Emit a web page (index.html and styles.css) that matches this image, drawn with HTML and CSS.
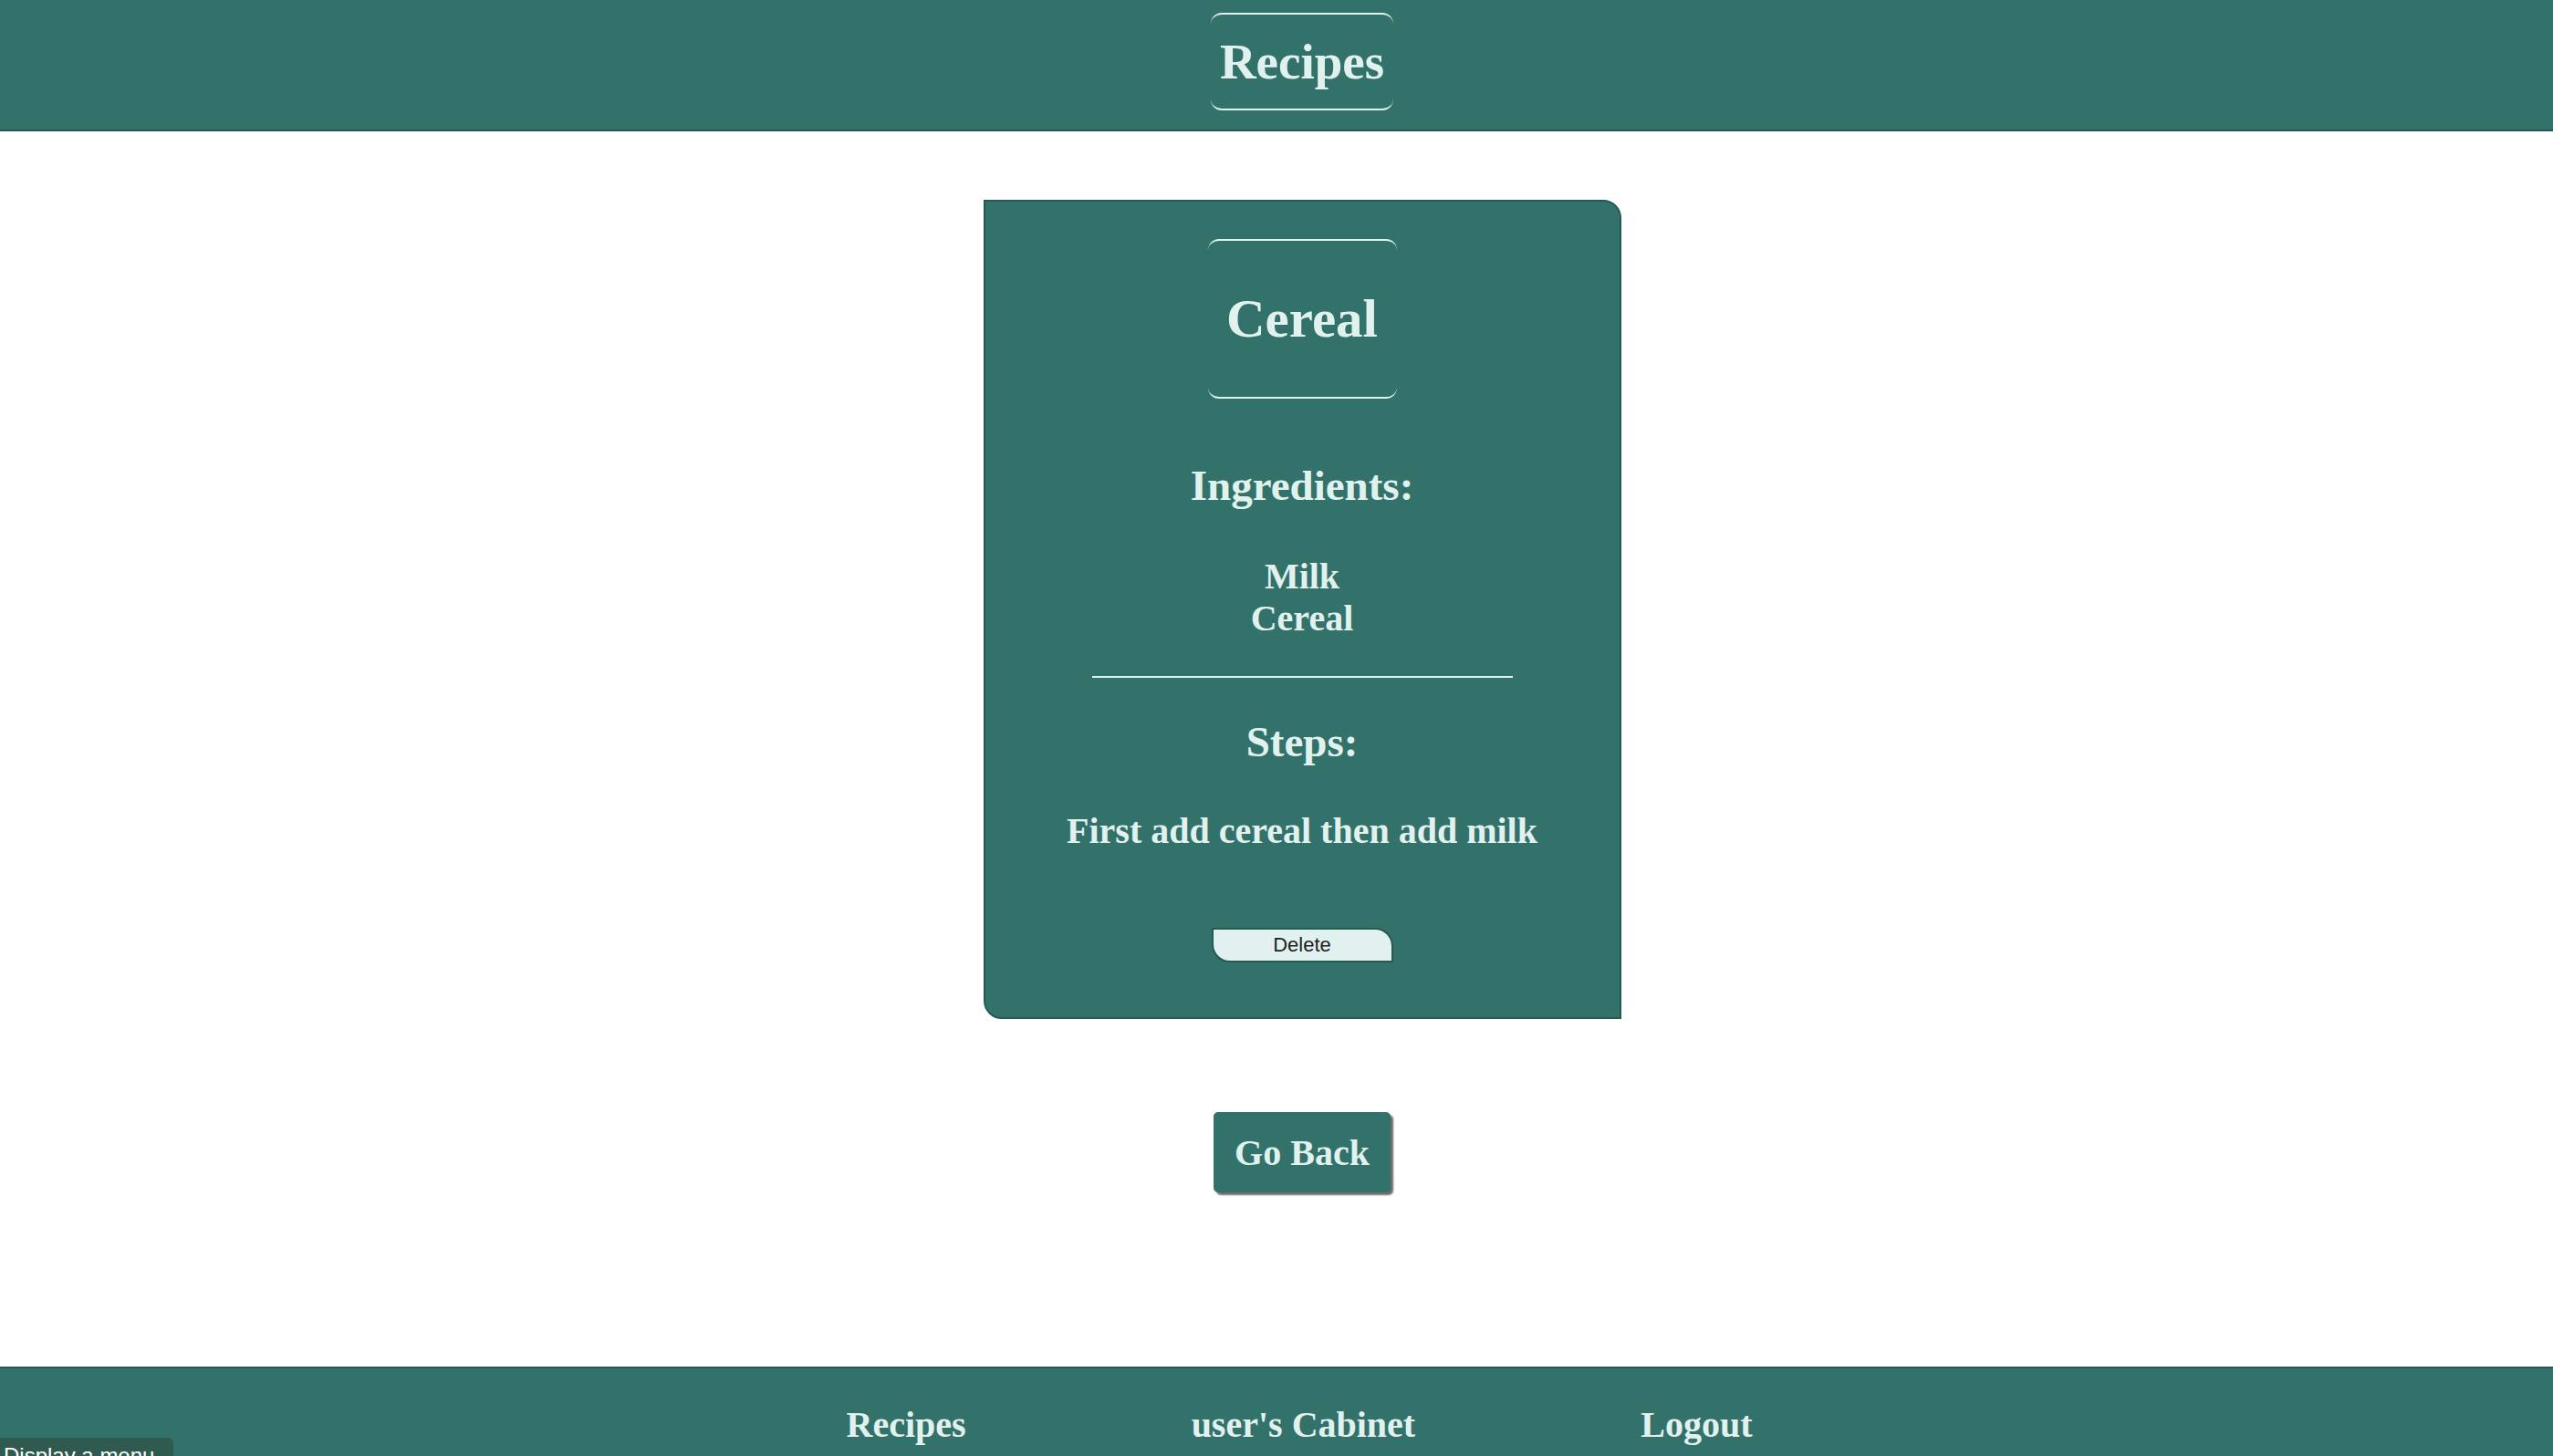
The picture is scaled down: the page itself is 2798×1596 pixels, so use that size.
FILE: index.html
```html
<!DOCTYPE html>
<html lang="en">
<head>
<meta charset="utf-8">
<title>Recipes</title>
<link rel="stylesheet" href="styles.css">
</head>
<body>
<header class="topbar">
  <div class="shift">
    <h1 class="brand">Recipes</h1>
  </div>
</header>
<main class="main shift">
  <section class="card">
    <h1 class="card-title">Cereal</h1>
    <h2 class="section-title first">Ingredients:</h2>
    <ul class="ingredients">
      <li>Milk</li>
      <li>Cereal</li>
    </ul>
    <hr class="divider">
    <h2 class="section-title">Steps:</h2>
    <p class="steps">First add cereal then add milk</p>
    <button class="delete" type="button">Delete</button>
  </section>
  <button class="back" type="button">Go Back</button>
</main>
<footer class="footer">
  <nav class="footer-nav shift">
    <a class="footer-link" href="#">Recipes</a>
    <a class="footer-link" href="#">user's Cabinet</a>
    <a class="footer-link" href="#">Logout</a>
  </nav>
</footer>
<div class="tooltip">Display a menu</div>
</body>
</html>
```
FILE: styles.css
```css
html, body {
  margin: 0;
  padding: 0;
  background: #ffffff;
}
body {
  font-family: "Liberation Serif", "Times New Roman", serif;
  color: #e1f1ee;
  min-height: 1596px;
  display: flex;
  flex-direction: column;
}
.shift {
  padding-left: 56px;
}
.topbar {
  background: #33726a;
  border-bottom: 2px solid #245a52;
  height: 142px;
  display: flex;
  flex-direction: column;
  justify-content: flex-start;
}
.topbar .shift {
  display: flex;
  justify-content: center;
  padding-top: 14px;
}
.brand {
  margin: 0;
  font-size: 55px;
  line-height: 63px;
  font-weight: bold;
  padding: 20px 8px;
  width: 184px;
  text-align: center;
  border-top: 2px solid #e1f1ee;
  border-bottom: 2px solid #e1f1ee;
  border-radius: 12px;
}
.main {
  display: flex;
  flex-direction: column;
  align-items: center;
  padding-top: 75px;
  flex: 1;
}
.card {
  box-sizing: border-box;
  width: 699px;
  background: #33726a;
  border: 2px solid #245a52;
  border-radius: 0 20px 0 20px;
  padding: 41px 0 60px;
  display: flex;
  flex-direction: column;
  align-items: center;
  text-align: center;
}
.card-title {
  margin: 0;
  font-size: 59px;
  line-height: 68px;
  font-weight: bold;
  padding: 51px 18px 52px;
  width: 171px;
  border-top: 2px solid #e1f1ee;
  border-bottom: 2px solid #e1f1ee;
  border-radius: 12px;
}
.section-title {
  margin: 43px 0 0;
  font-size: 47px;
  line-height: 55px;
  font-weight: bold;
}
.section-title.first {
  margin-top: 68px;
}
.ingredients {
  list-style: none;
  margin: 49px 0 0;
  padding: 0;
  font-size: 40px;
  line-height: 46px;
  font-weight: bold;
}
.divider {
  width: 461px;
  height: 0;
  margin: 40px 0 0;
  border: 0;
  border-top: 2px solid #e1f1ee;
}
.steps {
  margin: 47px 0 0;
  font-size: 40px;
  line-height: 46px;
  font-weight: bold;
}
.delete {
  margin-top: 83px;
  box-sizing: border-box;
  width: 199px;
  height: 38px;
  background: #e1f1ef;
  border: 2px solid #245a52;
  border-radius: 0 20px 0 20px;
  font-family: "Liberation Sans", Arial, sans-serif;
  font-size: 22px;
  color: #1f1f1f;
  padding: 0;
}
.back {
  margin-top: 102px;
  box-sizing: border-box;
  width: 194px;
  height: 88px;
  background: #33726a;
  border: 0;
  border-radius: 5px;
  box-shadow: 3px 3px 2px #6b6b6b;
  font-family: "Liberation Serif", "Times New Roman", serif;
  font-weight: bold;
  font-size: 40px;
  color: #e1f1ee;
  padding: 0;
}
.footer {
  margin-top: 191px;
  background: #33726a;
  border-top: 2px solid #245a52;
  height: 150px;
}
.footer-nav {
  display: flex;
  justify-content: center;
  gap: 247px;
  padding-left: 50px;
  padding-top: 39px;
}
.footer-link {
  color: #e1f1ee;
  text-decoration: none;
  font-size: 40px;
  line-height: 46px;
  font-weight: bold;
}
.tooltip {
  position: fixed;
  left: 0;
  top: 1576px;
  width: 182px;
  height: 40px;
  padding: 6px 4px 0;
  background: #2f5a4f;
  border-top-right-radius: 6px;
  color: #ffffff;
  font-family: "Liberation Sans", Arial, sans-serif;
  font-size: 24px;
  line-height: 28px;
  white-space: nowrap;
}
```
